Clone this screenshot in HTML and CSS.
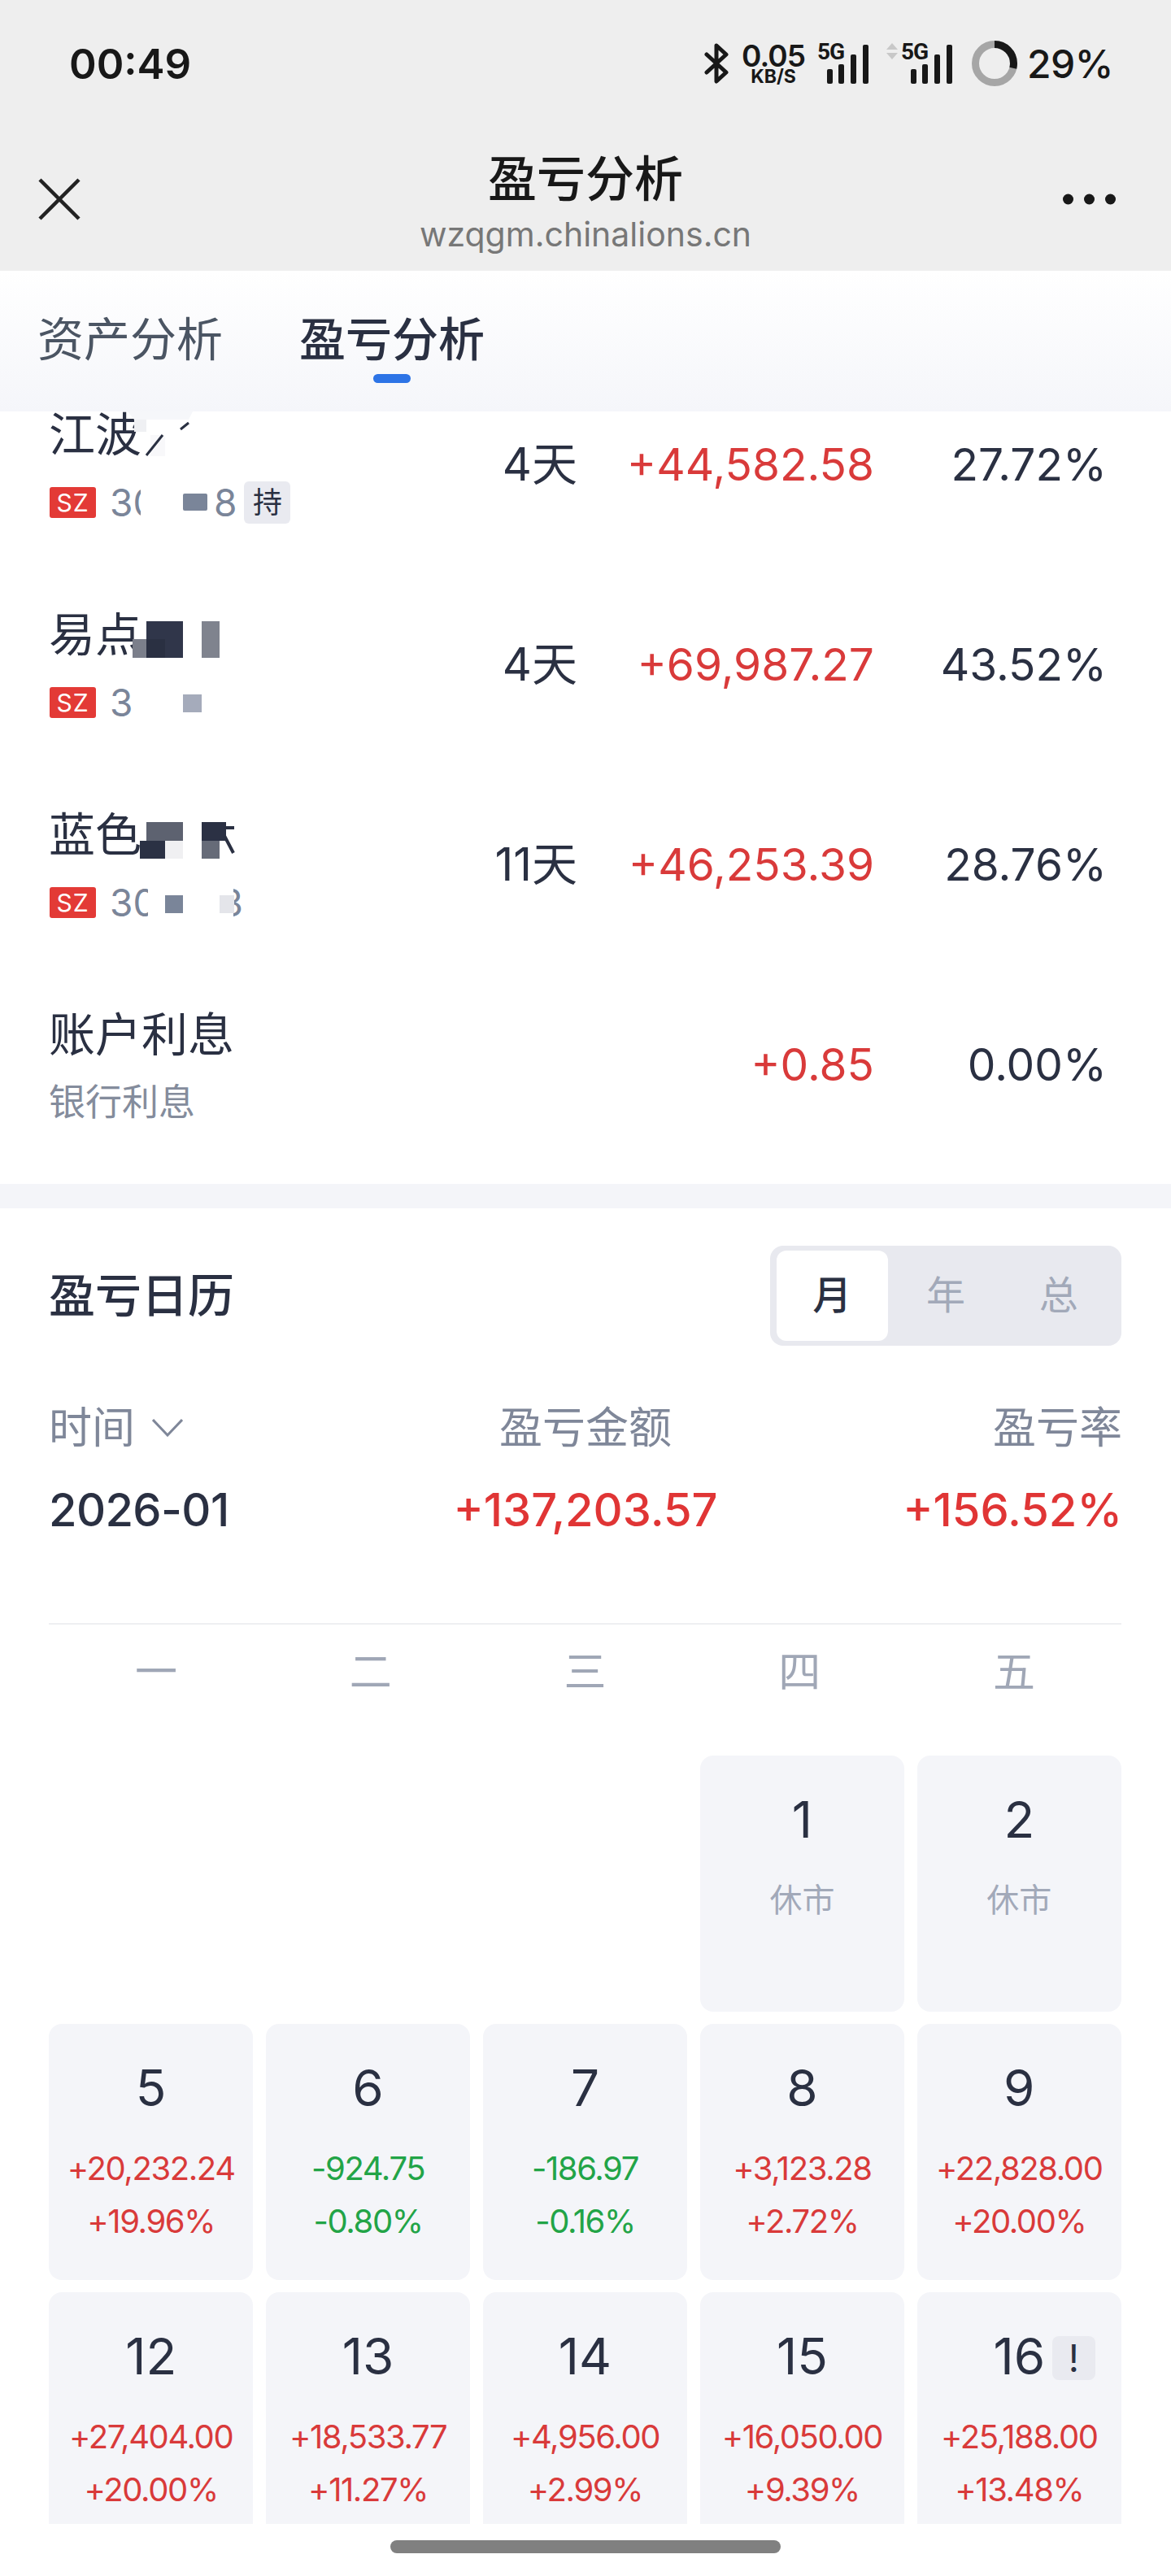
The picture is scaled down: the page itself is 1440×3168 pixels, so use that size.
FILE: index.html
```html
<!DOCTYPE html>
<html>
<head>
	<meta charset="utf-8">
	<title>盈亏分析</title>
	<link rel="stylesheet" href="styles.css">
</head>
<body>

<header class="top">
	<div class="status">
		<span class="time">00:49</span>
		<div class="status-right">
			<svg class="bt" viewBox="0 0 30 50"><path d="M3 14 L27 36 L15 47 V3 L27 14 L3 36" fill="none" stroke="#181818" stroke-width="5" stroke-linecap="round" stroke-linejoin="round"/></svg>
			<div class="speed">
				<span class="speed-num">0.05</span>
				<span class="speed-unit">KB/S</span>
			</div>
			<div class="sig">
				<span class="sig-tag">5G</span>
				<svg class="sig-bars" viewBox="0 0 51 48"><rect x="0" y="30" width="7" height="18" rx="2"/><rect x="14" y="24" width="7" height="24" rx="2"/><rect x="29" y="12" width="7" height="36" rx="2"/><rect x="44" y="0" width="7" height="48" rx="2"/></svg>
			</div>
			<svg class="arrows" viewBox="0 0 14 20"><path d="M7 0 L14 8 H0 Z M0 12 H14 L7 20 Z" fill="#c8c8c8"/></svg>
			<div class="sig sig-second">
				<span class="sig-tag">5G</span>
				<svg class="sig-bars" viewBox="0 0 51 48"><rect x="0" y="30" width="7" height="18" rx="2"/><rect x="14" y="24" width="7" height="24" rx="2"/><rect x="29" y="12" width="7" height="36" rx="2"/><rect x="44" y="0" width="7" height="48" rx="2"/></svg>
			</div>
			<svg class="ring" viewBox="0 0 56 56"><circle cx="28" cy="28" r="23.5" fill="none" stroke="#a6a6a6" stroke-width="9"/><circle cx="28" cy="28" r="23.5" fill="none" stroke="#181818" stroke-width="9" pathLength="100" stroke-dasharray="29 71" transform="rotate(-90 28 28)"/></svg>
			<span class="batt">29%</span>
		</div>
	</div>
	<div class="nav">
		<svg class="close" viewBox="0 0 52 52"><path d="M2 2 L50 50 M50 2 L2 50" fill="none" stroke="#222" stroke-width="4.5"/></svg>
		<div class="nav-title">
			<div class="title">盈亏分析</div>
			<div class="domain">wzqgm.chinalions.cn</div>
		</div>
		<svg class="more" viewBox="0 0 65 14"><circle cx="6.5" cy="7" r="6.5"/><circle cx="32.5" cy="7" r="6.5"/><circle cx="58.5" cy="7" r="6.5"/></svg>
	</div>
</header>

<nav class="tabs">
	<span class="tab">资产分析</span>
	<span class="tab tab-on">盈亏分析</span>
</nav>

<main class="scroll">
	<section class="list">
		<div class="row">
			<div class="stock">
				<div class="name">江波</div>
				<div class="sub">
					<span class="sz">SZ</span>
					<span class="code clip-38">30</span>
					<span class="code gap-90">8</span>
					<span class="hold">持</span>
				</div>
			</div>
			<div class="days">4天</div>
			<div class="amt">+44,582.58</div>
			<div class="pct">27.72%</div>
			<svg class="mosaic" viewBox="0 0 400 246">
				<path d="M157 58 H237 L232 68 H165 Z" fill="#f6f7fa"/>
				<rect x="165" y="68" width="15" height="15" fill="#eff0f3"/>
				<rect x="185" y="87" width="18" height="26" fill="#f8f8fa"/>
				<path d="M180 112 L200 87 M222 80 L232 72" stroke="#2a3042" stroke-width="3" fill="none"/>
				<rect x="225" y="159" width="30" height="21" rx="2" fill="#7a8599"/>
			</svg>
		</div>
		<div class="row">
			<div class="stock">
				<div class="name">易点</div>
				<div class="sub">
					<span class="sz">SZ</span>
					<span class="code">3</span>
				</div>
			</div>
			<div class="days">4天</div>
			<div class="amt">+69,987.27</div>
			<div class="pct">43.52%</div>
			<svg class="mosaic" viewBox="0 0 400 246">
				<rect x="163" y="92" width="17" height="23" fill="#7b7f8b"/>
				<rect x="180" y="70" width="45" height="45" fill="#30364a"/>
				<rect x="180" y="92" width="23" height="23" fill="#2a3042"/>
				<rect x="248" y="70" width="22" height="45" fill="#7f838e"/>
				<rect x="225" y="160" width="23" height="22" fill="#a5abbb"/>
			</svg>
		</div>
		<div class="row">
			<div class="stock">
				<div class="name">蓝色</div>
				<div class="sub">
					<span class="sz">SZ</span>
					<span class="code clip-47">30</span>
					<span class="code gap-105 clip-end">3</span>
				</div>
			</div>
			<div class="days">11天</div>
			<div class="amt">+46,253.39</div>
			<div class="pct">28.76%</div>
			<svg class="mosaic" viewBox="0 0 400 246">
				<rect x="180" y="71" width="45" height="23" fill="#5d6270"/>
				<rect x="172" y="94" width="31" height="22" fill="#2b3144"/>
				<rect x="203" y="94" width="22" height="22" fill="#f0f0f2"/>
				<rect x="248" y="71" width="30" height="23" fill="#2b3144"/>
				<rect x="248" y="94" width="22" height="22" fill="#666b78"/>
				<path d="M276 78 H288 M276 88 L287 109" stroke="#2a3042" stroke-width="4" fill="none"/>
				<rect x="203" y="161" width="22" height="22" fill="#7a8599"/>
				<rect x="270" y="161" width="18" height="22" fill="#e4e5ea"/>
			</svg>
		</div>
		<div class="row">
			<div class="stock">
				<div class="name">账户利息</div>
				<div class="sub sub-text">银行利息</div>
			</div>
			<div class="days"></div>
			<div class="amt">+0.85</div>
			<div class="pct">0.00%</div>
		</div>
	</section>

	<section class="cal">
		<div class="cal-head">
			<h2 class="cal-title">盈亏日历</h2>
			<div class="seg">
				<span class="seg-item seg-on">月</span>
				<span class="seg-item">年</span>
				<span class="seg-item">总</span>
			</div>
		</div>
		<div class="sum sum-label">
			<div class="sum-time">时间<svg class="chev" viewBox="0 0 38 22"><path d="M1 1 L19 20 L37 1" fill="none" stroke="#7f8799" stroke-width="3"/></svg></div>
			<div class="mid">盈亏金额</div>
			<div class="end">盈亏率</div>
		</div>
		<div class="sum sum-value">
			<div class="sum-date">2026-01</div>
			<div class="mid red">+137,203.57</div>
			<div class="end red">+156.52%</div>
		</div>
		<div class="week">
			<span>一</span><span>二</span><span>三</span><span>四</span><span>五</span>
		</div>
		<div class="days-grid">
			<div class="blank"></div>
			<div class="blank"></div>
			<div class="blank"></div>
			<div class="cell"><div class="date">1</div><div class="rest">休市</div></div>
			<div class="cell"><div class="date">2</div><div class="rest">休市</div></div>

			<div class="cell"><div class="date">5</div><div class="v up">+20,232.24</div><div class="v up">+19.96%</div></div>
			<div class="cell"><div class="date">6</div><div class="v down">-924.75</div><div class="v down">-0.80%</div></div>
			<div class="cell"><div class="date">7</div><div class="v down">-186.97</div><div class="v down">-0.16%</div></div>
			<div class="cell"><div class="date">8</div><div class="v up">+3,123.28</div><div class="v up">+2.72%</div></div>
			<div class="cell"><div class="date">9</div><div class="v up">+22,828.00</div><div class="v up">+20.00%</div></div>

			<div class="cell"><div class="date">12</div><div class="v up">+27,404.00</div><div class="v up">+20.00%</div></div>
			<div class="cell"><div class="date">13</div><div class="v up">+18,533.77</div><div class="v up">+11.27%</div></div>
			<div class="cell"><div class="date">14</div><div class="v up">+4,956.00</div><div class="v up">+2.99%</div></div>
			<div class="cell"><div class="date">15</div><div class="v up">+16,050.00</div><div class="v up">+9.39%</div></div>
			<div class="cell"><div class="date">16</div><span class="warn">!</span><div class="v up">+25,188.00</div><div class="v up">+13.48%</div></div>
		</div>
	</section>
</main>

<footer class="home"><div class="home-bar"></div></footer>

</body>
</html>
```

FILE: styles.css
```css
* {
	margin: 0;
	padding: 0;
	box-sizing: border-box;
}
body {
	width: 1440px;
	height: 3168px;
	overflow: hidden;
	display: flex;
	flex-direction: column;
	background: #fff;
	color: #2a3042;
	font-family: Inter, "Noto Sans CJK SC", sans-serif;
}

/* top bar */
.top {
	height: 333px;
	flex: none;
	background: #eee;
	color: #181818;
}
.status {
	height: 182px;
	padding: 0 71px 26px 85px;
	display: flex;
	align-items: center;
	justify-content: space-between;
}
.time {
	font-size: 51px;
	font-weight: 600;
}
.status-right {
	display: flex;
	align-items: center;
}
.bt {
	width: 30px;
	height: 50px;
}
.speed {
	width: 78px;
	margin-left: 16px;
	display: flex;
	flex-direction: column;
	align-items: center;
}
.speed-num {
	font-size: 37px;
	font-weight: 600;
	line-height: 31px;
	letter-spacing: -1px;
}
.speed-unit {
	font-size: 23px;
	font-weight: 700;
	line-height: 20px;
}
.sig {
	position: relative;
	width: 63px;
	height: 50px;
	margin-left: 15px;
}
.sig-second {
	margin-left: 4px;
}
.sig-tag {
	position: absolute;
	left: 0;
	top: 0;
	font-family: Roboto, sans-serif;
	font-size: 28px;
	font-weight: 700;
	line-height: 22px;
	letter-spacing: -1px;
}
.sig-bars {
	position: absolute;
	right: 0;
	bottom: 0;
	width: 51px;
	height: 48px;
	fill: #181818;
}
.arrows {
	width: 14px;
	height: 20px;
	margin: 0 0 30px 22px;
}
.ring {
	width: 56px;
	height: 56px;
	margin-left: 24px;
}
.batt {
	margin-left: 12px;
	font-size: 48px;
	font-weight: 500;
	letter-spacing: -0.5px;
}
.nav {
	display: grid;
	grid-template-columns: 1fr auto 1fr;
	align-items: center;
	padding: 0 47px;
}
.close {
	width: 52px;
	height: 52px;
	margin-bottom: 6px;
}
.more {
	width: 65px;
	height: 14px;
	margin: 0 21px 6px 0;
	justify-self: end;
	fill: #181818;
}
.nav-title {
	text-align: center;
}
.title {
	font-size: 60px;
	font-weight: 500;
	line-height: 76px;
}
.domain {
	margin-top: 4px;
	font-size: 41px;
	line-height: 52px;
	color: #777;
}

/* tabs */
.tabs {
	height: 173px;
	flex: none;
	padding: 47px 0 0 46px;
	display: flex;
	gap: 94px;
	background: linear-gradient(#fff, #f5f6fa);
	position: relative;
	z-index: 1;
}
.tab {
	position: relative;
	height: 76px;
	font-size: 57px;
	line-height: 76px;
	color: #4b5563;
}
.tab-on {
	color: #2a3042;
	font-weight: 500;
}
.tab-on::after {
	content: "";
	position: absolute;
	left: 91px;
	top: 80px;
	width: 46px;
	height: 11px;
	border-radius: 6px;
	background: #2d74e6;
}

/* holdings */
.scroll {
	flex: 1;
	min-height: 0;
	overflow: hidden;
}
.list {
	margin-top: -58px;
	padding-bottom: 24px;
	border-bottom: 30px solid #f4f5f9;
}
.row {
	position: relative;
	height: 246px;
	padding: 0 79px 0 60px;
	display: grid;
	grid-template-columns: 1fr 110px 365px 286px;
	align-items: center;
	font-size: 55px;
	line-height: 72px;
}
.name {
	height: 72px;
	font-size: 57px;
}
.days {
	font-size: 56px;
}
.sub {
	height: 52px;
	margin-top: 21px;
	display: flex;
	align-items: center;
	line-height: 52px;
}
.sub-text {
	font-size: 45px;
	color: #848c9c;
}
.sz {
	width: 57px;
	height: 38px;
	margin: 0 17px 0 1px;
	border-radius: 3px;
	background: #e33a36;
	color: #fff;
	font-size: 30px;
	font-weight: 400;
	line-height: 38px;
	letter-spacing: 1px;
	text-align: center;
}
.code {
	font-size: 46px;
	color: #7a8599;
	overflow: hidden;
	white-space: nowrap;
}
.clip-38 {
	width: 38px;
}
.clip-47 {
	width: 47px;
}
.gap-90 {
	margin-left: 90px;
}
.gap-105 {
	margin-left: 105px;
}
.clip-end {
	width: 12px;
	display: flex;
	justify-content: flex-end;
}
.hold {
	width: 57px;
	height: 52px;
	margin-left: 9px;
	border-radius: 6px;
	background: #e9eaf0;
	font-size: 36px;
	line-height: 52px;
	text-align: center;
}
.days,
.amt,
.pct {
	text-align: right;
}
.amt {
	color: #d93a3a;
}
.mosaic {
	position: absolute;
	left: 0;
	top: 0;
	width: 400px;
	height: 246px;
}

/* calendar */
.cal {
	padding: 46px 0 0;
}
.cal-head {
	display: flex;
	align-items: center;
	justify-content: space-between;
	padding: 0 61px 0 60px;
}
.cal-title {
	margin-bottom: 10px;
	font-size: 57px;
	font-weight: 500;
}
.seg {
	width: 432px;
	height: 123px;
	padding: 6px 8px;
	display: flex;
	border-radius: 16px;
	background: #e8e9ef;
}
.seg-item {
	width: 140px;
	font-size: 48px;
	line-height: 109px;
	text-align: center;
	color: #a2a9b9;
}
.seg-on {
	width: 138px;
	margin-right: 2px;
	border-radius: 12px;
	background: #fff;
	color: #2a3042;
	font-weight: 500;
}
.sum {
	display: grid;
	grid-template-columns: 1fr 1fr 1fr;
	padding: 0 60px;
}
.sum-label {
	margin-top: 65px;
	font-size: 53px;
	line-height: 72px;
	color: #7f8799;
}
.sum-value {
	margin-top: 29px;
	font-size: 56px;
	font-weight: 500;
	line-height: 72px;
}
.sum-date {
	letter-spacing: -0.6px;
}
.sum-time {
	display: flex;
	align-items: center;
}
.chev {
	width: 38px;
	height: 22px;
	margin-left: 21px;
}
.mid {
	text-align: center;
	white-space: nowrap;
}
.end {
	text-align: right;
}
.red {
	color: #e03535;
}
.week {
	margin: 103px 61px 0 60px;
	padding-top: 23px;
	border-top: 2px solid #eeeff2;
	display: grid;
	grid-template-columns: repeat(5, 1fr);
	font-size: 52px;
	line-height: 72px;
	text-align: center;
	color: #a0a7b6;
}
.days-grid {
	margin: 66px 61px 0 60px;
	display: grid;
	grid-template-columns: repeat(5, 1fr);
	grid-auto-rows: 315px;
	gap: 15px 15.5px;
}
.cell {
	position: relative;
	padding-top: 43px;
	border-radius: 16px;
	background: #f4f5f9;
	text-align: center;
}
.date {
	height: 72px;
	margin-bottom: 30px;
	font-size: 62px;
	line-height: 72px;
}
.rest {
	font-size: 40px;
	line-height: 65px;
	color: #a2a9b9;
}
.v {
	font-size: 40px;
	line-height: 65px;
	letter-spacing: -1.4px;
	white-space: nowrap;
}
.up {
	color: #d93a3a;
}
.down {
	color: #22a447;
}
.warn {
	position: absolute;
	right: 32px;
	top: 54px;
	width: 53px;
	height: 54px;
	border-radius: 8px;
	background: #e9eaf0;
	font-size: 46px;
	line-height: 54px;
}

/* home indicator */
.home {
	height: 64px;
	flex: none;
	padding-top: 20px;
}
.home-bar {
	width: 480px;
	height: 16px;
	margin: 0 auto;
	border-radius: 8px;
	background: #808080;
}
```
